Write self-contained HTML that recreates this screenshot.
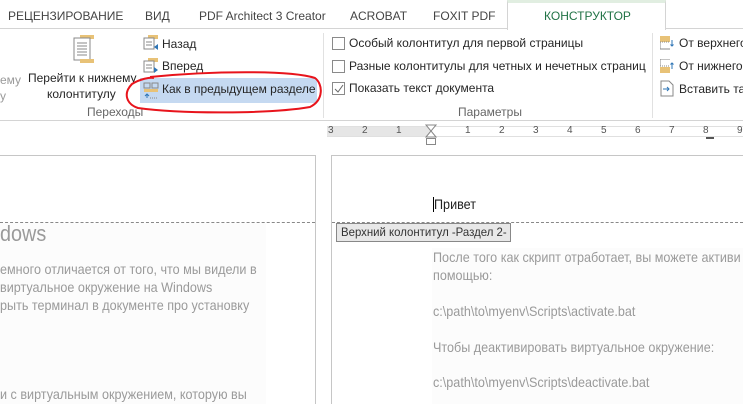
<!DOCTYPE html>
<html style="width:743px;height:404px;overflow:hidden"><head><meta charset="utf-8"><style>
*{margin:0;padding:0;box-sizing:border-box}
body{width:743px;height:404px;overflow:hidden;background:#fff;font-family:"Segoe UI","Liberation Sans","DejaVu Sans",sans-serif;position:relative;color:#444}
.a{position:absolute;white-space:nowrap}
.tab{font-size:12px;color:#444;top:9px}
.rb{font-size:12px;color:#262626}
.cb{position:absolute;width:13px;height:13px;border:1px solid #8a8a8a;background:#fff}
.doc{font-family:"Liberation Sans",sans-serif;color:#9a9a9a;font-size:14px;transform:scaleX(0.9);transform-origin:0 0}
</style></head><body>
<div class="a" style="left:0;top:0;width:743px;height:29px;border-bottom:1px solid #d4d4d4"></div>
<div class="a tab" style="left:8px">РЕЦЕНЗИРОВАНИЕ</div>
<div class="a tab" style="left:145px">ВИД</div>
<div class="a tab" style="left:199px">PDF Architect 3 Creator</div>
<div class="a tab" style="left:350px">ACROBAT</div>
<div class="a tab" style="left:433px">FOXIT PDF</div>
<div class="a" style="left:507px;top:0;width:159px;height:30px;background:#fff;border:1px solid #d4d4d4;border-top:3px solid #e1eee1;border-bottom:none"></div>
<div class="a tab" style="left:544px;color:#217346">КОНСТРУКТОР</div>
<div class="a" style="left:0;top:120px;width:743px;height:1px;background:#d4d4d4"></div>
<div class="a" style="left:323px;top:33px;width:1px;height:85px;background:#e1e1e1"></div>
<div class="a" style="left:652px;top:33px;width:1px;height:85px;background:#e1e1e1"></div>
<div class="a rb" style="left:0;top:73px;color:#9a9a9a">ему</div>
<div class="a rb" style="left:0;top:89px;color:#9a9a9a">у</div>
<svg class="a" style="left:70px;top:35px" width="28" height="32"><rect x="10" y="0" width="14" height="4" fill="#e8c277"/><rect x="4" y="3" width="16" height="22" fill="#fff" stroke="#888"/><path d="M7 8h10M7 11h10M7 14h10M7 17h10M7 20h10" stroke="#888"/><rect x="10" y="24" width="14" height="4" fill="#e8c277"/></svg>
<div class="a rb" style="left:28px;top:71px">Перейти к нижнему</div>
<div class="a rb" style="left:47px;top:87px">колонтитулу</div>
<div class="a" style="left:140px;top:78px;width:177px;height:25px;background:#c5d9f1"></div>
<svg class="a" style="left:143px;top:35px" width="16" height="16"><rect x="5" y="0" width="10" height="4" fill="#e8c277"/><rect x="1" y="3" width="10" height="11" fill="#fff" stroke="#888"/><path d="M3 7h6M3 10h6" stroke="#888"/><path d="M15 9l-4 3 4 3z" fill="#2e75b6"/></svg>
<div class="a rb" style="left:162px;top:37px">Назад</div>
<svg class="a" style="left:143px;top:58px" width="16" height="16"><rect x="5" y="0" width="10" height="4" fill="#e8c277"/><rect x="1" y="3" width="10" height="11" fill="#fff" stroke="#888"/><path d="M3 7h6M3 10h6" stroke="#888"/><path d="M11 9l4 3-4 3z" fill="#2e75b6"/></svg>
<div class="a rb" style="left:162px;top:59px">Вперед</div>
<svg class="a" style="left:143px;top:82px" width="16" height="18"><rect x="1" y="1" width="6" height="5" fill="none" stroke="#888"/><rect x="9" y="1" width="6" height="5" fill="none" stroke="#888"/><rect x="1" y="7" width="14" height="3" fill="#e8c277"/><path d="M4 16v-4M2 14l2-2 2 2" stroke="#2e75b6" fill="none"/><path d="M7 16h8" stroke="#888" stroke-dasharray="1 1"/></svg>
<div class="a rb" style="left:162px;top:82px">Как в предыдущем разделе</div>
<svg class="a" style="left:120px;top:68px" width="210" height="50"><path d="M30 9C90 3 170 2 195 10 203 16 204 32 190 39 150 46 60 46 18 40 6 36 3 25 12 16 20 11 30 9 34 10" fill="none" stroke="#e8141c" stroke-width="2"/></svg>
<div class="a rb" style="left:87px;top:105px;color:#666">Переходы</div>
<div class="cb" style="left:332px;top:37px"></div>
<div class="a rb" style="left:349px;top:36px">Особый колонтитул для первой страницы</div>
<div class="cb" style="left:332px;top:60px"></div>
<div class="a rb" style="left:349px;top:59px">Разные колонтитулы для четных и нечетных страниц</div>
<div class="cb" style="left:332px;top:82px"></div>
<svg class="a" style="left:334px;top:84px" width="10" height="10"><path d="M1 5l3 3 5-7" fill="none" stroke="#666"/></svg>
<div class="a rb" style="left:349px;top:81px">Показать текст документа</div>
<div class="a rb" style="left:458px;top:105px;color:#666">Параметры</div>
<svg class="a" style="left:660px;top:36px" width="14" height="14"><rect x="0" y="0" width="10" height="6" fill="#e8c277"/><path d="M0 6h10" stroke="#888" stroke-dasharray="1 1"/><path d="M0 6v7h10" fill="none" stroke="#888"/><path d="M12 4v6M10.5 8.5l1.5 1.5 1.5-1.5" stroke="#2e75b6" fill="none"/></svg>
<div class="a rb" style="left:679px;top:36px">От верхнего</div>
<svg class="a" style="left:660px;top:59px" width="14" height="14"><path d="M0 7V0h10" fill="none" stroke="#888"/><path d="M0 7h10" stroke="#888" stroke-dasharray="1 1"/><rect x="0" y="8" width="10" height="6" fill="#e8c277"/><path d="M12 10V4M10.5 5.5l1.5-1.5 1.5 1.5" stroke="#2e75b6" fill="none"/></svg>
<div class="a rb" style="left:679px;top:59px">От нижнего</div>
<svg class="a" style="left:660px;top:80px" width="14" height="17"><path d="M1 1h8l4 4v11H1z" fill="#fff" stroke="#888"/><path d="M3 9h6M7 7l2 2-2 2" stroke="#2e75b6" fill="none"/></svg>
<div class="a rb" style="left:679px;top:82px">Вставить та</div>
<div class="a" style="left:327px;top:126px;width:416px;height:11px;background:#fff;border-top:1px solid #e0e0e0;border-bottom:1px solid #e0e0e0"></div>
<div class="a" style="left:327px;top:127px;width:104px;height:9px;background:#e6e6e6"></div>
<div class="a" style="left:327px;top:125px;font-size:10px;color:#555;font-family:'Liberation Sans',sans-serif">
<span class="a" style="left:1px">3</span><span class="a" style="left:35px">2</span><span class="a" style="left:69px">1</span><span class="a" style="left:138px">1</span><span class="a" style="left:172px">2</span><span class="a" style="left:206px">3</span><span class="a" style="left:240px">4</span><span class="a" style="left:274px">5</span><span class="a" style="left:308px">6</span><span class="a" style="left:342px">7</span><span class="a" style="left:376px">8</span><span class="a" style="left:410px">9</span></div>
<svg class="a" style="left:425px;top:124px" width="12" height="24"><path d="M1 1h10L6 7 11 13H1L6 7z" fill="#fff" stroke="#888"/><rect x="1.5" y="14.5" width="9" height="6" fill="#fff" stroke="#888"/></svg>
<div class="a" style="left:706px;top:137px;width:8px;height:2px;background:#555"></div>
<div class="a" style="left:-2px;top:155px;width:318px;height:249px;border:1px solid #c6c6c6;border-bottom:none;background:#fff"></div>
<div class="a" style="left:331px;top:155px;width:412px;height:249px;border:1px solid #c6c6c6;border-bottom:none;border-right:none;background:#fff"></div>
<div class="a" style="left:0;top:222px;width:315px;border-top:1px dashed #888"></div>
<div class="a" style="left:332px;top:222px;width:411px;border-top:1px dashed #888"></div>
<div class="a" style="left:0;top:223px;width:266px;height:181px;background:#fcfcfc"></div>
<div class="a" style="left:432px;top:248px;width:311px;height:156px;background:#fcfcfc"></div>
<div class="a" style="left:433px;top:197px;width:1px;height:15px;background:#000"></div>
<div class="a doc" style="left:434px;top:196px;color:#222">Привет</div>
<div class="a" style="left:336px;top:223px;width:175px;height:19px;background:#e8e8e8;border:1px solid #888"></div>
<div class="a doc" style="left:341px;top:225px;color:#333;font-size:12px;transform:scaleX(0.95)">Верхний колонтитул -Раздел 2-</div>
<div class="a doc" style="left:0;top:221px;font-size:22px">dows</div>
<div class="a doc" style="left:0;top:261px">емного отличается от того, что мы видели в</div>
<div class="a doc" style="left:0;top:279px">виртуальное окружение на Windows</div>
<div class="a doc" style="left:0;top:297px">рыть терминал в документе про установку</div>
<div class="a doc" style="left:0;top:386px">и с виртуальным окружением, которую вы</div>
<div class="a doc" style="left:433px;top:249px">После того как скрипт отработает, вы можете активи</div>
<div class="a doc" style="left:433px;top:267px">помощью:</div>
<div class="a doc" style="left:433px;top:303px">c:\path\to\myenv\Scripts\activate.bat</div>
<div class="a doc" style="left:433px;top:339px">Чтобы деактивировать виртуальное окружение:</div>
<div class="a doc" style="left:433px;top:374px">c:\path\to\myenv\Scripts\deactivate.bat</div>
</body></html>
